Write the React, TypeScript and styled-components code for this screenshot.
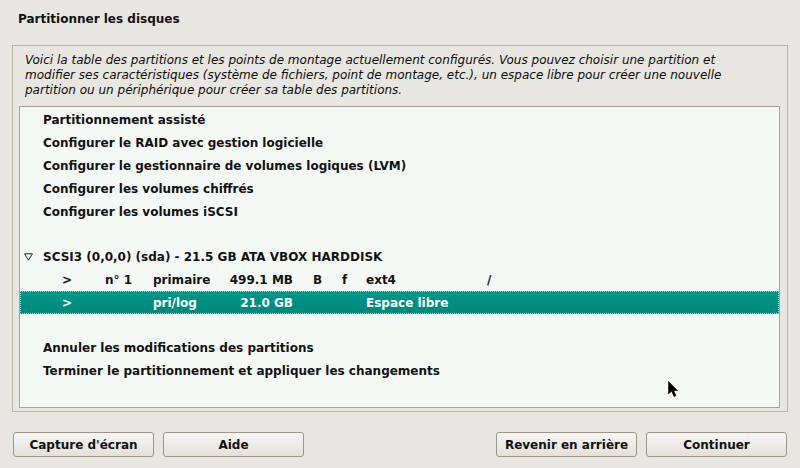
import React from "react";
import styled, { createGlobalStyle } from "styled-components";

const Global = createGlobalStyle`
  html, body { margin: 0; padding: 0; }
  body {
    background: #e8e6e1;
    font-family: "DejaVu Sans", "Liberation Sans", sans-serif;
    color: #111;
  }
`;

const Page = styled.div`
  position: relative;
  width: 800px;
  height: 468px;
  display: flex;
  flex-direction: column;
  box-sizing: border-box;
`;

const Title = styled.h1`
  margin: 0;
  height: 45px;
  box-sizing: border-box;
  padding: 12px 0 0 18px;
  font-size: 12px;
  line-height: 15px;
  font-weight: bold;
`;

const Panel = styled.div`
  margin: 0 12px;
  height: 367px;
  box-sizing: border-box;
  border: 1px solid #bbb5a8;
  padding: 7px 7px 3px 6px;
  display: flex;
  flex-direction: column;
`;

const Description = styled.p`
  margin: 0 0 8px 6px;
  font-size: 12px;
  line-height: 15px;
  font-style: italic;
  color: #0c0c0c;
`;

const List = styled.div`
  flex: 1;
  border: 1px solid #aaa395;
  background: #f5f9f6;
  padding-top: 1px;
  display: flex;
  flex-direction: column;
`;

const Row = styled.div<{ $selected?: boolean }>`
  height: 23px;
  flex: none;
  box-sizing: border-box;
  display: flex;
  align-items: center;
  font-size: 12px;
  font-weight: bold;
  white-space: pre;
  color: ${(p) => (p.$selected ? "#ffffff" : "#111")};
  background: ${(p) =>
    p.$selected ? "linear-gradient(#009686, #00887b)" : "transparent"};
  border: 1px dotted ${(p) => (p.$selected ? "#a8ddd5" : "transparent")};
`;

const BlankRow = styled.div`
  height: 22px;
  flex: none;
`;

const MenuText = styled.span`
  padding-left: 22px;
`;

const DiskRow = styled(Row)`
  padding-left: 3px;
`;

const Triangle = styled.svg`
  width: 9px;
  height: 8px;
  margin-right: 10px;
  flex: none;
`;

const PartRow = styled(Row)`
  display: grid;
  grid-template-columns: 43px 48px 69px 91px 29px 24px 121px 1fr;
  padding-left: 41px;
`;

const Cell = styled.span<{ $right?: boolean }>`
  text-align: ${(p) => (p.$right ? "right" : "left")};
  padding-right: ${(p) => (p.$right ? "20px" : "0")};
`;

const Buttons = styled.div`
  margin: 20px 13px 0 13px;
  height: 25px;
  display: flex;
  gap: 9px;
`;

const Spacer = styled.div`
  flex: 1;
`;

const Button = styled.button`
  width: 141px;
  height: 25px;
  border: 1px solid #9d978a;
  border-radius: 3px;
  background: linear-gradient(#f8f7f4, #e3e0d9);
  font-family: "DejaVu Sans", "Liberation Sans", sans-serif;
  font-size: 12px;
  font-weight: bold;
  color: #111;
  padding: 0;
`;

const Cursor = styled.svg`
  position: absolute;
  left: 668px;
  top: 381px;
  width: 12px;
  height: 18px;
`;

type Part = {
  arrow: string;
  num: string;
  type: string;
  size: string;
  b: string;
  f: string;
  fs: string;
  mount: string;
  selected?: boolean;
};

const parts: Part[] = [
  { arrow: ">", num: "n° 1", type: "primaire", size: "499.1 MB", b: "B", f: "f", fs: "ext4", mount: "/" },
  { arrow: ">", num: "", type: "pri/log", size: "21.0 GB", b: "", f: "", fs: "Espace libre", mount: "", selected: true },
];

export default function App() {
  return (
    <Page>
      <Global />
      <Title>Partitionner les disques</Title>
      <Panel>
        <Description>
          Voici la table des partitions et les points de montage actuellement configurés. Vous pouvez choisir une partition et
          <br />
          modifier ses caractéristiques (système de fichiers, point de montage, etc.), un espace libre pour créer une nouvelle
          <br />
          partition ou un périphérique pour créer sa table des partitions.
        </Description>
        <List>
          <Row><MenuText>Partitionnement assisté</MenuText></Row>
          <Row><MenuText>Configurer le RAID avec gestion logicielle</MenuText></Row>
          <Row><MenuText>Configurer le gestionnaire de volumes logiques (LVM)</MenuText></Row>
          <Row><MenuText>Configurer les volumes chiffrés</MenuText></Row>
          <Row><MenuText>Configurer les volumes iSCSI</MenuText></Row>
          <BlankRow />
          <DiskRow>
            <Triangle viewBox="0 0 9 8">
              <path d="M0.6 0.8 L8.4 0.8 L4.5 7.2 Z" fill="none" stroke="#222" strokeWidth="1" />
            </Triangle>
            SCSI3 (0,0,0) (sda) - 21.5 GB ATA VBOX HARDDISK
          </DiskRow>
          {parts.map((p, i) => (
            <PartRow key={i} $selected={p.selected}>
              <Cell>{p.arrow}</Cell>
              <Cell>{p.num}</Cell>
              <Cell>{p.type}</Cell>
              <Cell $right>{p.size}</Cell>
              <Cell>{p.b}</Cell>
              <Cell>{p.f}</Cell>
              <Cell>{p.fs}</Cell>
              <Cell>{p.mount}</Cell>
            </PartRow>
          ))}
          <BlankRow />
          <Row><MenuText>Annuler les modifications des partitions</MenuText></Row>
          <Row><MenuText>Terminer le partitionnement et appliquer les changements</MenuText></Row>
        </List>
      </Panel>
      <Buttons>
        <Button>Capture d'écran</Button>
        <Button>Aide</Button>
        <Spacer />
        <Button>Revenir en arrière</Button>
        <Button>Continuer</Button>
      </Buttons>
      <Cursor viewBox="0 0 12 18">
        <path d="M0.5 0.5 L0.5 13 L3.5 10 L6 15.5 L8 14.5 L5.5 9.5 L9.5 9.5 Z" fill="#000" stroke="#000" strokeWidth="0.6" />
      </Cursor>
    </Page>
  );
}
